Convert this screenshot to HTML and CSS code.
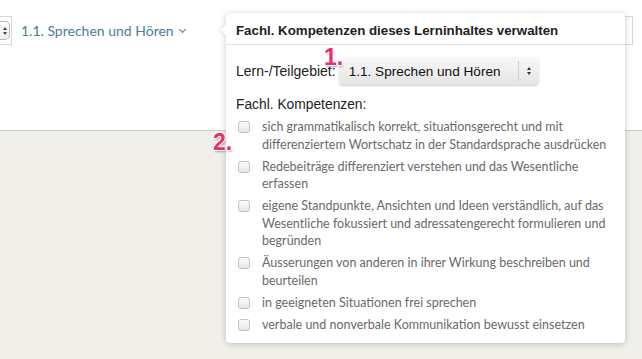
FILE: index.html
```html
<!DOCTYPE html>
<html>
<head>
    <title>Fachl. Kompetenzen verwalten</title>
    <link rel="stylesheet" href="styles.css">
</head>
<body>
<div class="topbar">
    <div class="stepper"><span class="pill"><i class="up"></i><i class="down"></i></span></div>
    <a class="crumb" href="#">1.1. Sprechen und Hören <span class="chev"></span></a>
    <div class="ghost"></div>
</div>

<div class="popover">
    <div class="pop-head">Fachl. Kompetenzen dieses Lerninhaltes verwalten</div>
    <div class="pop-body">
        <div class="area-row">
            <span class="area-label">Lern-/Teilgebiet:</span>
            <div class="select">
                <span class="sel-text">1.1. Sprechen und Hören</span>
                <span class="sel-arrows"><i class="up"></i><i class="down"></i></span>
            </div>
        </div>
        <div class="list-title">Fachl. Kompetenzen:</div>
        <ul class="skills">
            <li><span class="box"></span><span>sich grammatikalisch korrekt, situationsgerecht und mit differenziertem Wortschatz in der Standardsprache ausdrücken</span></li>
            <li><span class="box"></span><span>Redebeiträge differenziert verstehen und das Wesentliche erfassen</span></li>
            <li><span class="box"></span><span>eigene Standpunkte, Ansichten und Ideen verständlich, auf das Wesentliche fokussiert und adressatengerecht formulieren und begründen</span></li>
            <li><span class="box"></span><span>Äusserungen von anderen in ihrer Wirkung beschreiben und beurteilen</span></li>
            <li><span class="box"></span><span>in geeigneten Situationen frei sprechen</span></li>
            <li><span class="box"></span><span>verbale und nonverbale Kommunikation bewusst einsetzen</span></li>
        </ul>
    </div>
    <span class="mark mark-1">1.</span>
    <span class="mark mark-2">2.</span>
</div>
</body>
</html>
```

FILE: styles.css
```css
body {
    margin: 0;
    background-color: #f0efe9;
    font-family: "Liberation Sans", Helvetica, sans-serif;
    font-size: 13px;
    color: #222;
}

.topbar {
    height: 131px;
    background-color: #fff;
    border-bottom: 1px solid #cfcdc8;
    display: flex;
    align-items: flex-start;
    padding-top: 16px;
    box-sizing: border-box;
}

.stepper {
    width: 12px;
    height: 29px;
    border: 1px solid #d6d6d6;
    border-left: none;
    box-sizing: border-box;
    display: flex;
    align-items: center;
}

.stepper .pill {
    width: 9px;
    height: 17px;
    border: 1px solid #b9b9b9;
    border-left: none;
    border-radius: 0 5px 5px 0;
    display: flex;
    flex-direction: column;
    align-items: center;
    justify-content: center;
    gap: 2px;
    background: linear-gradient(#fff, #eee);
}

.up, .down {
    display: block;
    width: 0;
    height: 0;
    border-left: 2.5px solid transparent;
    border-right: 2.5px solid transparent;
}

.up { border-bottom: 3px solid #444; }
.down { border-top: 3px solid #444; }

.crumb {
    margin-left: 9px;
    margin-top: 6px;
    font-family: Lato, "Open Sans", sans-serif;
    font-size: 14px;
    color: #4f7d93;
    text-decoration: none;
    display: flex;
    align-items: center;
}

.chev {
    display: inline-block;
    width: 4px;
    height: 4px;
    border-right: 1.2px solid #4f7d93;
    border-bottom: 1.2px solid #4f7d93;
    transform: rotate(45deg);
    margin-left: 6px;
    margin-top: -3px;
}

.ghost {
    margin-left: auto;
    margin-right: 9px;
    width: 40px;
    height: 29px;
    border: 1px solid #d6d6d6;
    box-sizing: border-box;
}

.popover {
    position: absolute;
    left: 226px;
    top: 13px;
    width: 399px;
    height: 330px;
    background-color: #fff;
    border-radius: 4px;
    box-shadow: 0 1px 6px rgba(0, 0, 0, 0.22);
}

.popover:before {
    content: "";
    position: absolute;
    left: -6px;
    top: 11px;
    border-top: 6px solid transparent;
    border-bottom: 6px solid transparent;
    border-right: 6px solid #fff;
    filter: drop-shadow(-1px 0 1px rgba(0, 0, 0, 0.12));
}

.pop-head {
    height: 32px;
    line-height: 36px;
    padding: 0 10px;
    font-size: 13.3px;
    font-weight: bold;
    border-bottom: 1px solid #e2e2e2;
    box-sizing: border-box;
}

.pop-body {
    padding: 12px 10px 0 10px;
}

.area-row {
    display: flex;
    align-items: center;
    gap: 3px;
    font-size: 14px;
}

.select {
    width: 200px;
    height: 28px;
    box-sizing: border-box;
    border-radius: 4px;
    background: linear-gradient(#f8f8f8, #e4e4e4);
    box-shadow: 0 1px 2px rgba(0, 0, 0, 0.2);
    display: flex;
    align-items: center;
}

.sel-text {
    flex: 1;
    padding-left: 10px;
    font-size: 13.6px;
    color: #111;
}

.sel-arrows {
    width: 20px;
    height: 20px;
    border-left: 1px solid #cfcfcf;
    display: flex;
    flex-direction: column;
    align-items: center;
    justify-content: center;
    gap: 2px;
}

.sel-arrows .up { border-bottom-color: #333; }
.sel-arrows .down { border-top-color: #333; }

.list-title {
    margin-top: 12px;
    font-size: 13.8px;
    line-height: 16px;
    color: #222;
}

.skills {
    list-style: none;
    margin: 5px 0 0 0;
    padding: 0;
    font-family: Lato, "Open Sans", sans-serif;
    font-size: 12.5px;
    line-height: 17.5px;
    color: #6a6a6a;
}

.skills li {
    display: flex;
    margin-bottom: 4.5px;
}

.box {
    flex: none;
    width: 12px;
    height: 12px;
    margin: 3px 12px 0 2px;
    border: 1px solid #c2c2c2;
    border-radius: 3px;
    box-sizing: border-box;
    background: linear-gradient(#fcfcfc, #e6e6e6);
}

.mark {
    position: absolute;
    font-family: "Liberation Sans", sans-serif;
    font-weight: bold;
    font-size: 23px;
    color: #e5306c;
    text-shadow: 1px 0 0 #fff, -1px 0 0 #fff, 0 1px 0 #fff, 0 -1px 0 #fff, 1px 2px 2px rgba(0, 0, 0, 0.3);
}

.mark-1 {
    left: 98px;
    top: 31px;
}

.mark-2 {
    left: -13px;
    top: 116px;
}
```
